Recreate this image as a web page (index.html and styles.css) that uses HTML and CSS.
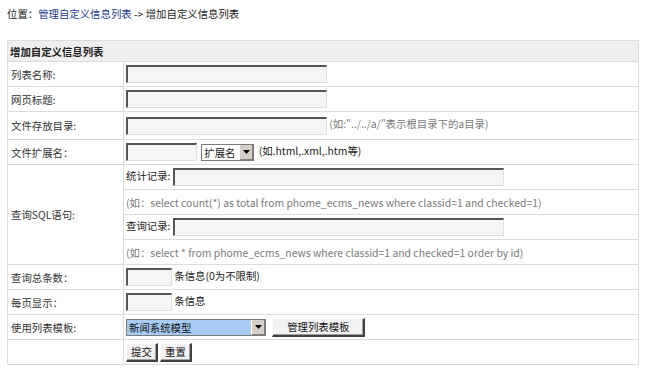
FILE: index.html
```html
<!DOCTYPE html>
<html lang="zh-CN">
<head>
  <meta charset="UTF-8">
  <title>增加自定义信息列表</title>
  <link rel="stylesheet" href="styles.css">
</head>
<body>

  <!-- 当前位置 -->
  <div class="nav">位置：<a href="#">管理自定义信息列表</a> -&gt; 增加自定义信息列表</div>

  <form>
    <table class="tableborder">
      <tr class="header">
        <td colspan="2">增加自定义信息列表</td>
      </tr>
      <tr>
        <td class="label">列表名称:</td>
        <td><input type="text" class="w-long"></td>
      </tr>
      <tr>
        <td class="label">网页标题:</td>
        <td><input type="text" class="w-long"></td>
      </tr>
      <tr class="row-tall">
        <td class="label">文件存放目录:</td>
        <td><input type="text" class="w-long"> <span class="tip">(如:"../../a/"表示根目录下的a目录)</span></td>
      </tr>
      <tr>
        <td class="label">文件扩展名：</td>
        <td>
          <input type="text" class="w-ext">
          <span class="fake-select sel-ext"><span class="sel-text">扩展名</span><span class="sel-arrow"><svg width="7" height="4" viewBox="0 0 7 4"><path d="M0 0h7L3.5 4z" fill="#000"/></svg></span></span>
          (如.html,.xml,.htm等)
        </td>
      </tr>
      <tr>
        <td class="label">查询SQL语句:</td>
        <td class="inner-cell">
          <table class="inner">
            <tr><td>统计记录: <input type="text" class="w-sql"></td></tr>
            <tr><td class="tip">(如：select count(*) as total from phome_ecms_news where classid=1 and checked=1)</td></tr>
            <tr><td>查询记录: <input type="text" class="w-sql"></td></tr>
            <tr><td class="tip">(如：select * from phome_ecms_news where classid=1 and checked=1 order by id)</td></tr>
          </table>
        </td>
      </tr>
      <tr>
        <td class="label">查询总条数：</td>
        <td><input type="text" class="w-num"> 条信息(0为不限制)</td>
      </tr>
      <tr>
        <td class="label">每页显示：</td>
        <td><input type="text" class="w-num"> 条信息</td>
      </tr>
      <tr>
        <td class="label">使用列表模板:</td>
        <td>
          <span class="fake-select sel-tpl"><span class="sel-text">新闻系统模型</span><span class="sel-arrow"><svg width="7" height="4" viewBox="0 0 7 4"><path d="M0 0h7L3.5 4z" fill="#000"/></svg></span></span>
          <button type="button" class="btn btn-manage">管理列表模板</button>
        </td>
      </tr>
      <tr>
        <td class="label">&nbsp;</td>
        <td>
          <button type="submit" class="btn">提交</button>
          <button type="reset" class="btn">重置</button>
        </td>
      </tr>
    </table>
  </form>

</body>
</html>
```

FILE: styles.css
```css
body {
  margin: 0;
  padding: 0 7px;
  background: #fff;
  color: #222;
  font-family: "Noto Sans CJK SC", "DejaVu Sans", sans-serif;
  font-size: 10.4px;
}

.nav {
  height: 40px;
  line-height: 28px;
  color: #222;
}

.nav a {
  color: #1d3c8c;
  text-decoration: none;
}

form {
  margin: 0;
}

.tableborder {
  width: 632px;
  border-collapse: collapse;
  border: 1px solid #dcdcdc;
}

.tableborder td {
  border: 1px solid #dcdcdc;
  height: 24px;
  padding: 0 2px;
  vertical-align: middle;
}

.tableborder .header td {
  background: #efefef;
  font-weight: bold;
  height: 20px;
}

.tableborder td.label {
  width: 110px;
  padding-left: 3px;
  color: #333;
}

.row-tall td {
  height: 27px;
}

.tip {
  color: #7a7a7a;
}

input[type="text"] {
  height: 18px;
  box-sizing: border-box;
  margin: 0;
  vertical-align: middle;
  background: #f5f5f5;
  border-style: solid;
  border-width: 2px 1px 1px 2px;
  border-color: #555 #dedede #dedede #555;
}

.w-long { width: 201px; }
.w-ext  { width: 71px; }
.w-num  { width: 46px; }
.w-sql  { width: 331px; }

.inner-cell {
  padding: 0 !important;
}

.tableborder .inner {
  width: 100%;
  border-collapse: collapse;
}

.tableborder .inner td {
  border: none;
  border-top: 1px solid #dcdcdc;
  height: 24px;
  padding: 0 2px;
}

.tableborder .inner tr:first-child td {
  border-top: none;
}

.fake-select {
  display: inline-flex;
  align-items: stretch;
  box-sizing: border-box;
  height: 17px;
  vertical-align: middle;
  white-space: nowrap;
  border: 1px solid #7a7a7a;
  background: #fff;
}

.sel-text {
  padding: 0 2px;
  line-height: 15px;
  flex: 1;
}

.sel-ext {
  width: 53px;
  margin: 0 2px;
}

.sel-tpl {
  width: 140px;
}

.sel-tpl .sel-text {
  background: #a7cbf2;
  color: #111;
}

.sel-arrow {
  width: 13px;
  flex: none;
  display: flex;
  align-items: center;
  justify-content: center;
  background: #d4d0c8;
  border-left: 1px solid #fff;
  box-shadow: inset -1px -1px 0 #808080;
}

.btn {
  font-family: inherit;
  font-size: 10.4px;
  height: 19px;
  padding: 0 4px;
  margin: 0;
  background: #f2f2f2;
  color: #111;
  vertical-align: middle;
  border-style: solid;
  border-width: 1px 2px 2px 1px;
  border-color: #fff #404040 #404040 #fff;
  box-shadow: inset -1px -1px 0 #a0a0a0;
  cursor: pointer;
}

.btn-manage {
  width: 93px;
  margin-left: 4px;
}
```
